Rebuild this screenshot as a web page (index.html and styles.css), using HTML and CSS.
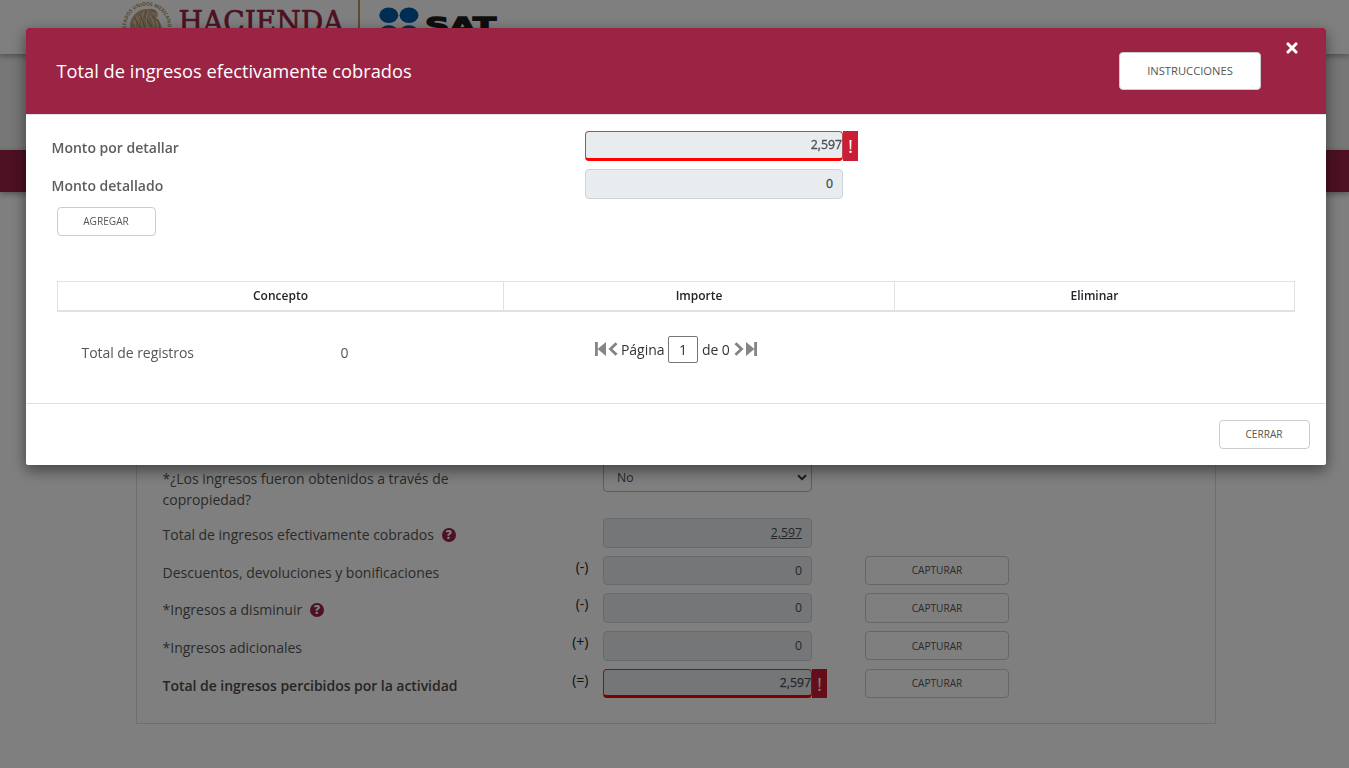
FILE: index.html
```html
<!DOCTYPE html>
<html lang="es">
<head>
<meta charset="utf-8">
<title>Total de ingresos efectivamente cobrados</title>
<link rel="stylesheet" href="styles.css">
</head>
<body>
<div class="page">
  <header class="top">
    <svg class="seal" width="50" height="50" viewBox="0 0 50 50">
      <defs><path id="ring" d="M4.7 29A20.8 20.8 0 1 1 45.3 29"/></defs>
      <text class="seal-text"><textPath href="#ring" textLength="73" lengthAdjust="spacingAndGlyphs">ESTADOS UNIDOS MEXICANOS</textPath></text>
      <path fill="#c2aa83" d="M9 30Q6 20 12 13q6-7 14-6 7-1 9 4 2 5-2 4 6 4 7 12l-3 9H11z"/>
      <g fill="none" stroke="#f0e8da" stroke-width=".7" stroke-linecap="round">
        <path d="M12 19q-2 6 1 12M15 15q-4 8 0 16M19 12q-6 8-1 18M22 10q-5 9 0 17M26 10q-4 7 0 14M30 11q3 2 5 1M28 14q5 6 3 12M32 17q4 2 5 7M22 26q5-3 8 2t7 0M34 20q3 3 2 9"/>
      </g>
      <g fill="none" stroke="#9c8050" stroke-width=".9" stroke-linecap="round">
        <path d="M11 22l3 6M13 16l6 13M18 12l5 14M24 9l-1 7M29 9q5-2 6 3M31 14l3 5M25 18l5 7M36 18l2 8"/>
      </g>
    </svg>
    <svg class="hacienda" width="168" height="40" viewBox="0 0 168 40"><text x="1.5" y="32" textLength="165" lengthAdjust="spacingAndGlyphs">HACIENDA</text></svg>
    <span class="divider"></span>
    <svg class="sat" width="120" height="44" viewBox="0 0 120 44">
      <g fill="#005ba8"><ellipse cx="9.8" cy="15.3" rx="9.5" ry="7.8"/><ellipse cx="30" cy="15.3" rx="9.5" ry="7.8"/><ellipse cx="9.8" cy="33" rx="9.5" ry="7.8"/><ellipse cx="30" cy="33" rx="9.5" ry="7.8"/></g>
      <text x="46" y="34" textLength="71" lengthAdjust="spacingAndGlyphs">SAT</text>
    </svg>
  </header>
  <div class="subhead"></div>
  <nav class="band"></nav>
  <main class="panel">
    <div class="row first">
      <label>*¿Los ingresos fueron obtenidos a través de copropiedad?</label><span></span>
      <div class="field select">No<svg width="10" height="7" viewBox="0 0 10 7"><path d="M1 1.2l4 4 4-4" fill="none" stroke="#333a40" stroke-width="2"/></svg></div>
    </div>
    <div class="row"><label>Total de ingresos efectivamente cobrados<i class="help">?</i></label><span></span><div class="field"><u>2,597</u></div></div>
    <div class="row"><label>Descuentos, devoluciones y bonificaciones</label><span class="sign">(-)</span><div class="field">0</div><button class="btn">CAPTURAR</button></div>
    <div class="row"><label>*Ingresos a disminuir<i class="help">?</i></label><span class="sign">(-)</span><div class="field">0</div><button class="btn">CAPTURAR</button></div>
    <div class="row"><label>*Ingresos adicionales</label><span class="sign">(+)</span><div class="field">0</div><button class="btn">CAPTURAR</button></div>
    <div class="row"><label class="strong">Total de ingresos percibidos por la actividad</label><span class="sign">(=)</span><div class="field invalid">2,597<b class="alert">!</b></div><button class="btn">CAPTURAR</button></div>
  </main>
</div>
<div class="backdrop"></div>
<section class="modal">
  <header class="modal-head">
    <h1>Total de ingresos efectivamente cobrados</h1>
    <button class="btn big">INSTRUCCIONES</button>
    <svg class="close" width="12" height="12" viewBox="0 0 12 12"><path d="M2 2l8 8M10 2l-8 8" stroke="#fff" stroke-width="3.1" stroke-linecap="round"/></svg>
  </header>
  <div class="modal-body">
    <div class="mrow"><label>Monto por detallar</label><div class="field invalid">2,597<b class="alert">!</b></div></div>
    <div class="mrow"><label>Monto detallado</label><div class="field">0</div></div>
    <button class="btn add">AGREGAR</button>
    <table class="grid"><thead><tr><th class="c1">Concepto</th><th class="c2">Importe</th><th>Eliminar</th></tr></thead></table>
    <div class="foot">
      <span class="total">Total de registros</span><span class="count">0</span>
      <div class="pager">
        <svg width="23" height="14" viewBox="0 0 23 14"><path fill="#858585" d="M0 0h2.8v14H0zM11 0v14L2.6 7z"/><path d="M21.5 1.2L15.5 7l6 5.8" fill="none" stroke="#858585" stroke-width="2.9"/></svg>
        <span class="word">Página</span><span class="num">1</span><span class="of">de 0</span>
        <svg width="23" height="14" viewBox="0 0 23 14"><path fill="#858585" d="M20.2 0H23v14h-2.8zM12 0v14l8.4-7z"/><path d="M1.5 1.2l6 5.8-6 5.8" fill="none" stroke="#858585" stroke-width="2.9"/></svg>
      </div>
    </div>
  </div>
  <footer class="modal-foot"><button class="btn">CERRAR</button></footer>
</section>
</body>
</html>
```
FILE: styles.css
```css
* { box-sizing: border-box; }
body { margin: 0; background: #fff; font-family: "Open Sans", sans-serif; font-size: 14px; color: #555; overflow: hidden; }
.page { height: 768px; }
.top { position: relative; height: 54px; padding-left: 122px; display: flex; background: #fff; box-shadow: 0 2px 6px rgba(0,0,0,.35); }
.seal { margin-top: 2px; overflow: visible; }
.seal-text { font-size: 5px; font-weight: 700; fill: #a98d5d; }
.hacienda { margin-left: 5px; }
.hacienda text { font: 400 29px "DejaVu Serif", serif; fill: #9b2247; stroke: #9b2247; stroke-width: .7; }
.divider { width: 2px; height: 44px; margin: 0 19px 0 13px; background: #bc955c; }
.sat text { font: 700 23px "DejaVu Sans", sans-serif; fill: #1d1d1b; stroke: #1d1d1b; stroke-width: 1.4; }
.subhead { height: 96px; background: #efefef; }
.band { height: 42px; background: #9b2247; box-shadow: 0 2px 6px rgba(0,0,0,.35); }
.panel { width: 1080px; height: 532px; margin-left: 136px; padding: 268px 0 0 26px; border: 1px solid #ddd; border-top: 0; }
.row { display: grid; grid-template-columns: 390px 50px 209px 144px; height: 37.7px; align-items: start; }
.row .btn { margin-left: 53px; width: 144px; }
.row.first { height: 58px; }
.row.first label { width: 300px; }
.row label { line-height: 21px; padding-top: 6px; margin-left: -.4px; white-space: nowrap; letter-spacing: -.02px; }
.row.first label { white-space: normal; padding-top: 8px; }
.row.first .field { margin-top: 2px; padding-top: 2px; }
.row label.strong { font-weight: 600; letter-spacing: -.04px; color: #4a4a4a; }
.sign { color: #212529; text-align: right; padding-right: 14.5px; line-height: 21px; }
.help { display: inline-block; width: 14px; height: 14px; margin-left: 8px; border-radius: 50%; background: #9b2247; color: #fff; font: 800 12px/14px "Open Sans", sans-serif; text-align: center; vertical-align: 1px; }
.field { position: relative; height: 29.6px; border: 1px solid #ced4da; border-radius: 4px; background: #e9ecef; font-size: 12.25px; line-height: 28px; text-align: right; padding: 0 9px; color: #495057; }
.select { display: flex; justify-content: space-between; align-items: center; padding: 0 4px 0 13px; background: #fff; border-color: #bbb; }
.field.invalid { padding-right: 0; border: 1px solid #b54a55; border-bottom: 3px solid #f00; line-height: 26px; -webkit-text-stroke: .25px #495057; }
.alert { position: absolute; left: 100%; top: -1px; width: 15px; height: 29.6px; margin-left: 1px; background: #cb1d35; color: #fff; font: 400 19px/30px "Open Sans", sans-serif; text-align: center; -webkit-text-stroke: 0; }
.btn { height: 29.4px; padding: 0; border: 1px solid #ccc; border-radius: 4px; background: #fff; color: #555; font: 400 10.1px/26px "Open Sans", sans-serif; text-align: center; }
.backdrop { position: fixed; inset: 0; background: rgba(0,0,0,.5); }
.modal { position: fixed; left: 26px; top: 28px; width: 1300px; height: 437px; background: #fff; border-radius: 2px; box-shadow: 0 5px 15px rgba(0,0,0,.5); }
.modal-head { height: 87px; display: flex; background: #9b2445; border-bottom: 1px solid #dee2e6; border-radius: 2px 2px 0 0; }
.modal-head h1 { margin: 29px 0 0 30.5px; width: 1062.5px; color: #fff; font-size: 18.3px; font-weight: 400; line-height: 27px; }
.btn.big { width: 142px; height: 38px; margin-top: 24px; font-size: 11.2px; }
.close { margin: 14px 0 0 24.5px; }
.modal-body { height: 288px; padding: 16px 26px 0; }
.mrow { display: flex; height: 38px; }
.mrow label { width: 533px; font-weight: 600; line-height: 21px; padding-top: 6px; margin-left: -.5px; margin-right: .5px; color: #5d5d5d; }
.mrow .field { width: 258px; -webkit-text-stroke: .35px #495057; }
.mrow .alert { -webkit-text-stroke: 0; }
.add { display: block; width: 99px; margin: 0 0 0 5px; padding: 0 1px 3px 0; }
.grid { width: 1238px; height: 31px; margin: 45px 0 0 5px; table-layout: fixed; border-collapse: collapse; font-size: 12px; color: #212529; }
.grid th { padding: 0 0 2px; border: 1px solid #dee2e6; border-bottom-width: 2px; font-weight: 600; line-height: 25px; }
.grid .c1 { width: 446px; }
.grid .c2 { width: 391px; }
.foot { display: flex; margin-top: 23px; padding-left: 29.5px; line-height: 21px; }
.total { width: 259px; padding-top: 7px; letter-spacing: -.05px; }
.count { width: 254px; padding-top: 7px; }
.pager { display: flex; align-items: center; height: 28px; color: #333; }
.word { margin: 0 3.5px 0 3.5px; letter-spacing: -.05px; }
.num { width: 30px; height: 27px; border: 1px solid #767676; border-radius: 2px; line-height: 26px; text-align: center; }
.of { margin: 0 4px; letter-spacing: -.05px; }
.modal-foot { display: flex; justify-content: flex-end; height: 62px; padding: 16px 16px 0; border-top: 1px solid #dee2e6; }
.modal-foot .btn { width: 91px; padding: 0 1px 2px 0; }
```
